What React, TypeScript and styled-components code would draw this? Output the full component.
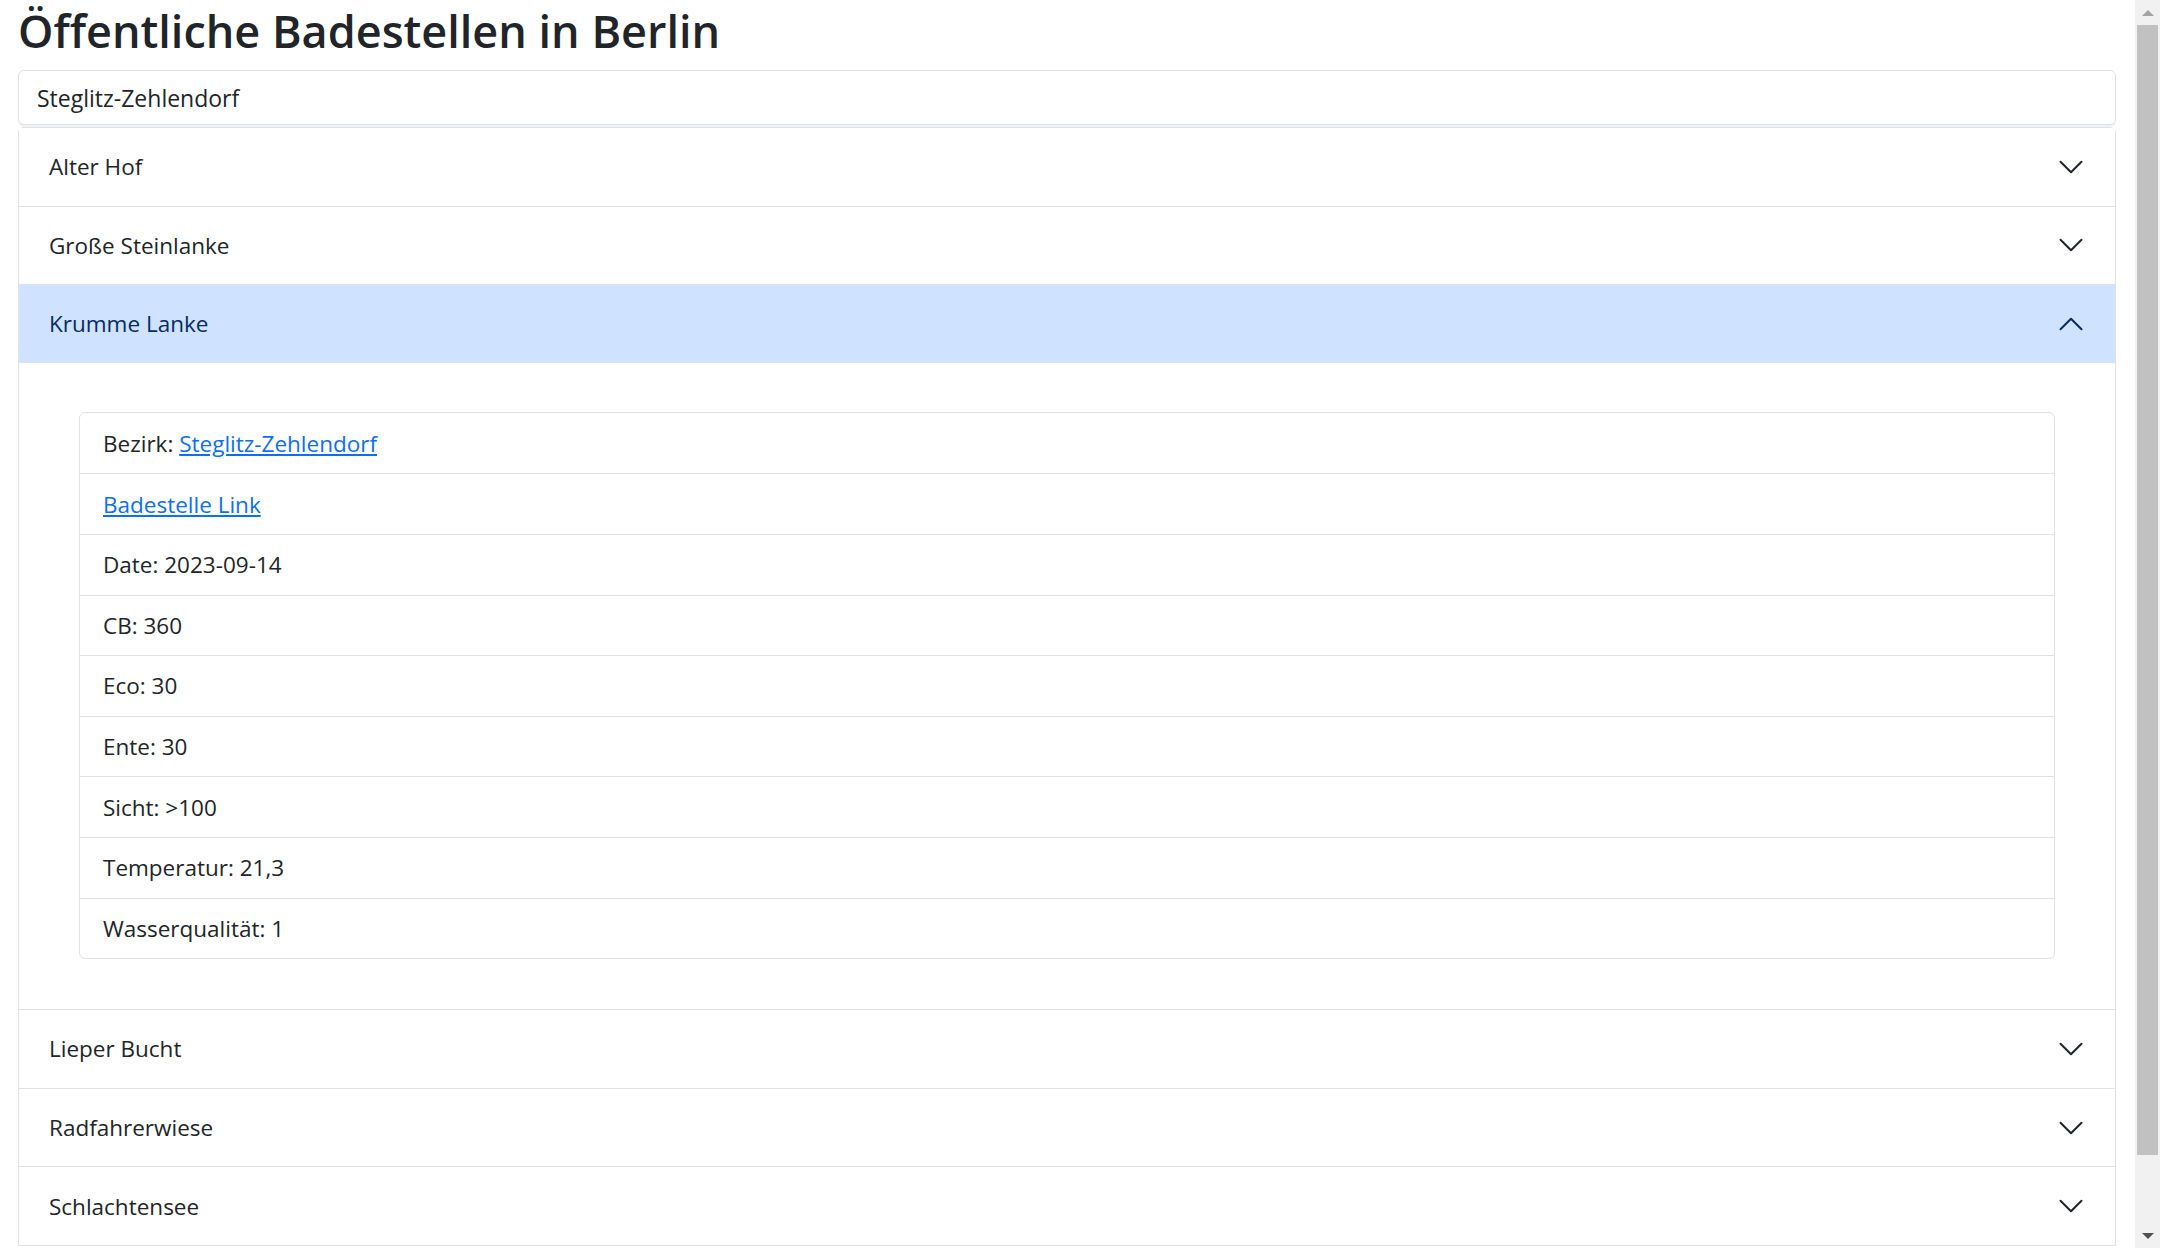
import { ReactElement } from 'react'
import styled, { createGlobalStyle } from 'styled-components'

const GlobalStyle = createGlobalStyle`
  *, *::before, *::after { box-sizing: border-box; }
  html, body {
    margin: 0;
    height: 100%;
    overflow: hidden;
    background: #fff;
    color: #212529;
    font-family: "Open Sans", "Noto Sans", "Liberation Sans", sans-serif;
  }
`

const Shell = styled.div`
  display: flex;
  height: 100vh;
`

const Page = styled.main`
  flex: 1;
  min-width: 0;
  padding: 0 19px 0 18px;
  overflow: hidden;
`

const Title = styled.h1`
  margin: 0 0 9px;
  font-size: 45px;
  font-weight: 600;
  line-height: 61px;
  color: #212529;
`

const Search = styled.input`
  display: block;
  width: 100%;
  height: 55px;
  padding: 0 18px;
  font: inherit;
  font-size: 23px;
  color: #212529;
  border: 1px solid #dee2e6;
  border-radius: 6px;
  box-shadow: 0 2px 1px rgba(0, 0, 0, 0.06);
  outline: none;
  margin-bottom: 2px;
`

const Accordion = styled.div`
  border: 1px solid #dee2e6;
  border-radius: 6px 6px 0 0;
`

const Item = styled.section`
  & + & { border-top: 1px solid #dee2e6; }
`

const Header = styled.button<{ $open?: boolean }>`
  display: flex;
  align-items: center;
  justify-content: space-between;
  width: 100%;
  height: 77.6px;
  padding: 0 30px 0 30px;
  border: 0;
  font: inherit;
  font-size: 22.5px;
  text-align: left;
  cursor: pointer;
  color: ${p => (p.$open ? '#052c65' : '#212529')};
  background: ${p => (p.$open ? '#cfe2ff' : '#fff')};
  box-shadow: ${p => (p.$open ? 'inset 0 -1px 0 #dee2e6' : 'none')};
`

const Chevron = styled.svg<{ $open?: boolean }>`
  width: 28px;
  height: 28px;
  flex-shrink: 0;
  transform: ${p => (p.$open ? 'rotate(-180deg)' : 'none')};
`

const Body = styled.div`
  padding: 49px 60px 50px 60px;
`

const List = styled.ul`
  list-style: none;
  margin: 0;
  padding: 0;
  border: 1px solid #dee2e6;
  border-radius: 6px;
`

const Row = styled.li`
  display: flex;
  align-items: center;
  height: 60.6px;
  padding: 0 23px;
  font-size: 22.5px;
  color: #212529;
  & + & { border-top: 1px solid #dee2e6; }
`

const Link = styled.a`
  color: #0d6efd;
  text-decoration: underline;
  text-underline-offset: 2px;
`

const Scrollbar = styled.div`
  width: 25px;
  display: flex;
  flex-direction: column;
  background: #f1f1f1;
`

const Arrow = styled.div<{ $down?: boolean }>`
  height: 25px;
  display: flex;
  align-items: center;
  justify-content: center;
  &::before {
    content: '';
    border-left: 6px solid transparent;
    border-right: 6px solid transparent;
    ${p => (p.$down ? 'border-top: 6px solid #505050;' : 'border-bottom: 6px solid #a3a3a3;')}
  }
`

const Thumb = styled.div`
  height: 1130px;
  margin: 0 2px;
  background: #c1c1c1;
`

const Track = styled.div`
  flex: 1;
`

function Arrowhead({ open }: { open?: boolean }): ReactElement {
  return (
    <Chevron $open={open} viewBox="0 0 16 16" fill="none" stroke={open ? '#052c65' : '#212529'} strokeWidth={1.15} strokeLinecap="round" strokeLinejoin="round">
      <path d="M2 5L8 11L14 5" />
    </Chevron>
  )
}

const before = ['Alter Hof', 'Große Steinlanke']
const after = ['Lieper Bucht', 'Radfahrerwiese', 'Schlachtensee']

const details = [
  'Date: 2023-09-14',
  'CB: 360',
  'Eco: 30',
  'Ente: 30',
  'Sicht: >100',
  'Temperatur: 21,3',
  'Wasserqualität: 1',
]

export default function App(): ReactElement {
  return (
    <>
      <GlobalStyle />
      <Shell>
        <Page>
          <Title>Öffentliche Badestellen in Berlin</Title>
          <Search defaultValue="Steglitz-Zehlendorf" />
          <Accordion>
            {before.map(name => (
              <Item key={name}>
                <Header>
                  {name}
                  <Arrowhead />
                </Header>
              </Item>
            ))}
            <Item>
              <Header $open>
                Krumme Lanke
                <Arrowhead open />
              </Header>
              <Body>
                <List>
                  <Row>Bezirk:&nbsp;<Link href="#">Steglitz-Zehlendorf</Link></Row>
                  <Row><Link href="#">Badestelle Link</Link></Row>
                  {details.map(d => (
                    <Row key={d}>{d}</Row>
                  ))}
                </List>
              </Body>
            </Item>
            {after.map(name => (
              <Item key={name}>
                <Header>
                  {name}
                  <Arrowhead />
                </Header>
              </Item>
            ))}
          </Accordion>
        </Page>
        <Scrollbar>
          <Arrow />
          <Thumb />
          <Track />
          <Arrow $down />
        </Scrollbar>
      </Shell>
    </>
  )
}
